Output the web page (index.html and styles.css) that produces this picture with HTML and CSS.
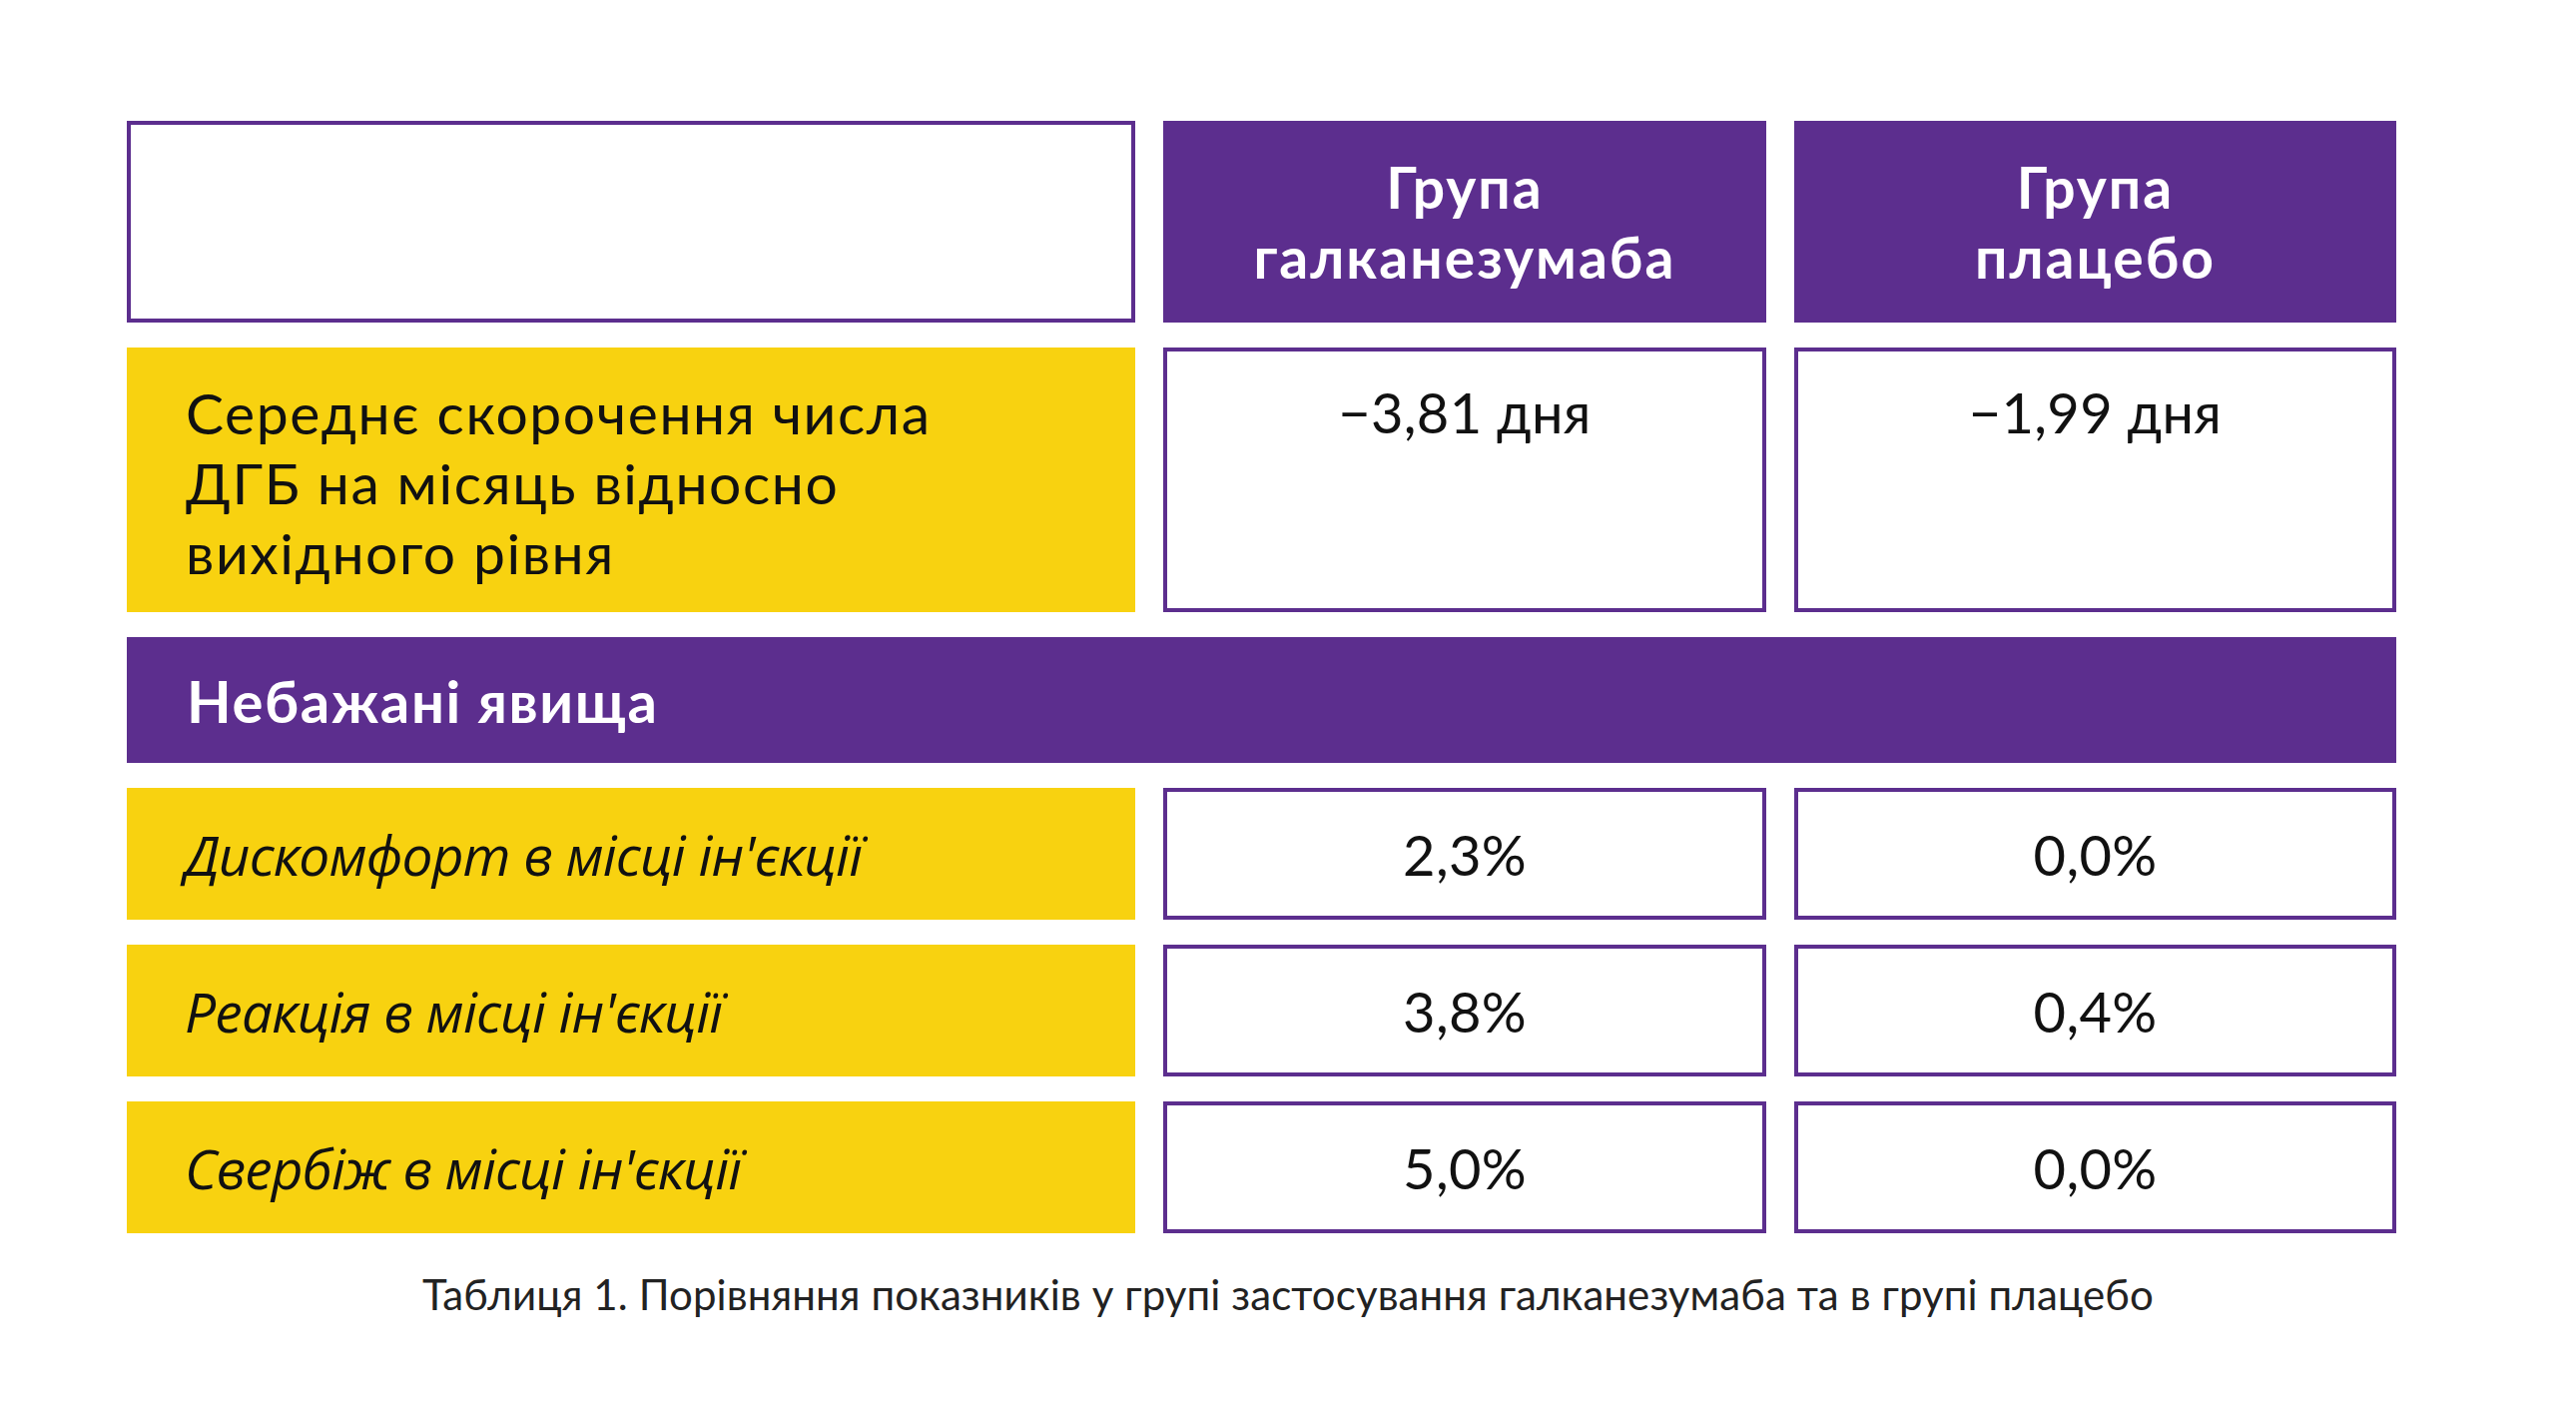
FILE: index.html
```html
<!DOCTYPE html>
<html lang="uk">
<head>
<meta charset="utf-8">
<title>Таблиця 1</title>
<link rel="stylesheet" href="styles.css">
</head>
<body>
<div class="page">
  <div class="table">
    <div class="cell blank"></div>
    <div class="cell head">Група<br>галканезумаба</div>
    <div class="cell head">Група<br>плацебо</div>

    <div class="cell label tall">Середнє скорочення числа<br>ДГБ на місяць відносно<br>вихідного рівня</div>
    <div class="cell value tall">−3,81 дня</div>
    <div class="cell value tall">−1,99 дня</div>

    <div class="cell banner">Небажані явища</div>

    <div class="cell label side">Дискомфорт в місці ін'єкції</div>
    <div class="cell value mid">2,3%</div>
    <div class="cell value mid">0,0%</div>

    <div class="cell label side">Реакція в місці ін'єкції</div>
    <div class="cell value mid">3,8%</div>
    <div class="cell value mid">0,4%</div>

    <div class="cell label side">Свербіж в місці ін'єкції</div>
    <div class="cell value mid">5,0%</div>
    <div class="cell value mid">0,0%</div>
  </div>
  <p class="caption">Таблиця 1. Порівняння показників у групі застосування галканезумаба та в групі плацебо</p>
</div>
</body>
</html>
```

FILE: styles.css
```css
html, body {
  margin: 0;
  padding: 0;
  background: #ffffff;
}

.page {
  width: 2580px;
  padding-top: 121px;
  font-family: "Lato", "Open Sans", sans-serif;
  color: #111111;
}

.table {
  margin-left: 127px;
  width: 2273px;
  display: grid;
  grid-template-columns: 1010px 604px 603px;
  grid-template-rows: 202px 265px 126px 132px 132px 132px;
  column-gap: 28px;
  row-gap: 25px;
}

.cell {
  box-sizing: border-box;
}

.blank {
  border: 4px solid #5c2e8e;
  background: #ffffff;
}

.head {
  background: #5c2e8e;
  color: #ffffff;
  font-weight: 700;
  font-size: 57px;
  line-height: 70px;
  letter-spacing: 2px;
  display: flex;
  align-items: center;
  justify-content: center;
  text-align: center;
}

.label {
  background: #f8d210;
  padding-left: 59px;
}

.label.tall {
  padding-top: 30px;
  font-size: 57px;
  line-height: 70px;
  font-weight: 400;
  letter-spacing: 1.6px;
}

.label.side {
  display: flex;
  align-items: center;
  padding-left: 58px;
  font-family: "Open Sans", "Lato", sans-serif;
  font-style: italic;
  font-weight: 500;
  font-size: 55px;
  letter-spacing: -0.8px;
}

.value {
  border: 4px solid #5c2e8e;
  background: #ffffff;
  text-align: center;
  font-size: 56px;
  font-weight: 400;
  letter-spacing: 0.3px;
}

.value.tall {
  padding-top: 26px;
  line-height: 70px;
}

.value.mid {
  display: flex;
  align-items: center;
  justify-content: center;
}

.banner {
  grid-column: 1 / 4;
  background: #5c2e8e;
  color: #ffffff;
  font-weight: 700;
  font-size: 58px;
  letter-spacing: 1.6px;
  display: flex;
  align-items: center;
  padding-left: 60px;
}

.caption {
  margin: 36px 0 0;
  text-align: center;
  font-size: 42px;
  line-height: 50px;
  letter-spacing: 0.1px;
  color: #222222;
}
```
